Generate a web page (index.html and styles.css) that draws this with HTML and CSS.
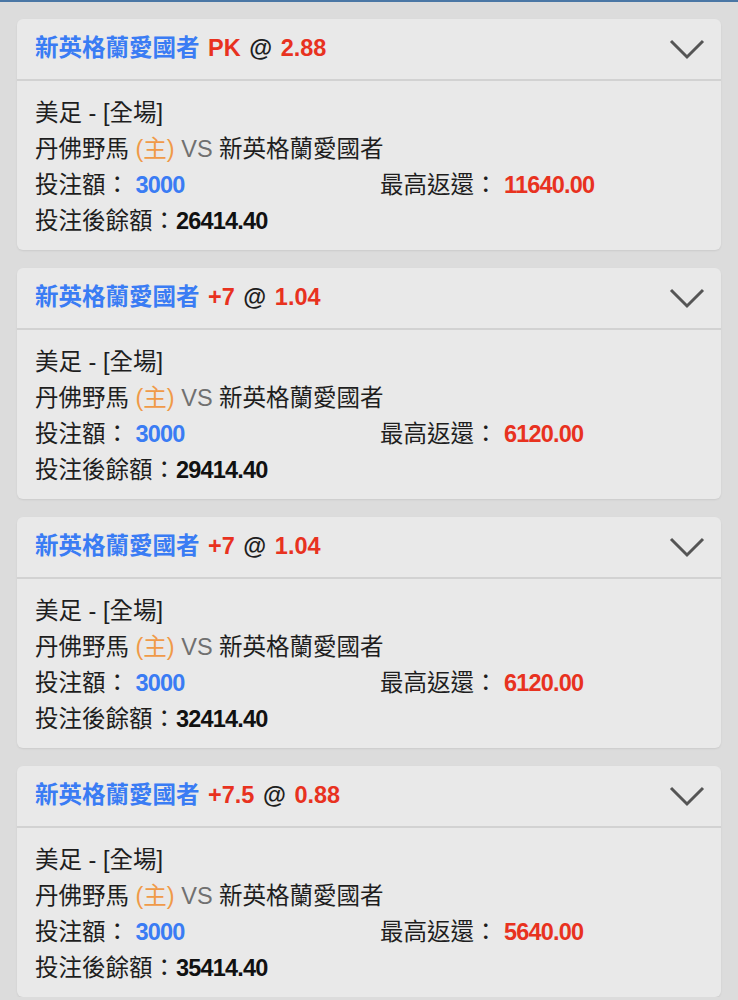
FILE: index.html
```html
<!DOCTYPE html>
<html lang="zh-Hant">
<head>
  <meta charset="UTF-8">
  <meta name="viewport" content="width=device-width, initial-scale=1.0">
  <title>注單</title>
  <link rel="stylesheet" href="styles.css">
</head>
<body>

  <div class="topbar"></div>

  <div class="list">

    <div class="bet">
      <div class="bet-head">
        <div class="pick"><span class="team">新英格蘭愛國者</span> <span class="red">PK</span> @ <span class="red">2.88</span></div>
        <svg class="chevron" width="36" height="22" viewBox="0 0 36 22"><path d="M2 3 L18 19 L34 3" fill="none" stroke="#555" stroke-width="3"/></svg>
      </div>
      <div class="bet-body">
        <div>美足 - [全場]</div>
        <div>丹佛野馬 <span class="home">(主)</span> <span class="vs">VS</span> 新英格蘭愛國者</div>
        <div class="row">
          <div class="col">投注額： <span class="blue num">3000</span></div>
          <div>最高返還： <span class="red num">11640.00</span></div>
        </div>
        <div>投注後餘額：<span class="bold num">26414.40</span></div>
      </div>
    </div>

    <div class="bet">
      <div class="bet-head">
        <div class="pick"><span class="team">新英格蘭愛國者</span> <span class="red">+7</span> @ <span class="red">1.04</span></div>
        <svg class="chevron" width="36" height="22" viewBox="0 0 36 22"><path d="M2 3 L18 19 L34 3" fill="none" stroke="#555" stroke-width="3"/></svg>
      </div>
      <div class="bet-body">
        <div>美足 - [全場]</div>
        <div>丹佛野馬 <span class="home">(主)</span> <span class="vs">VS</span> 新英格蘭愛國者</div>
        <div class="row">
          <div class="col">投注額： <span class="blue num">3000</span></div>
          <div>最高返還： <span class="red num">6120.00</span></div>
        </div>
        <div>投注後餘額：<span class="bold num">29414.40</span></div>
      </div>
    </div>

    <div class="bet">
      <div class="bet-head">
        <div class="pick"><span class="team">新英格蘭愛國者</span> <span class="red">+7</span> @ <span class="red">1.04</span></div>
        <svg class="chevron" width="36" height="22" viewBox="0 0 36 22"><path d="M2 3 L18 19 L34 3" fill="none" stroke="#555" stroke-width="3"/></svg>
      </div>
      <div class="bet-body">
        <div>美足 - [全場]</div>
        <div>丹佛野馬 <span class="home">(主)</span> <span class="vs">VS</span> 新英格蘭愛國者</div>
        <div class="row">
          <div class="col">投注額： <span class="blue num">3000</span></div>
          <div>最高返還： <span class="red num">6120.00</span></div>
        </div>
        <div>投注後餘額：<span class="bold num">32414.40</span></div>
      </div>
    </div>

    <div class="bet">
      <div class="bet-head">
        <div class="pick"><span class="team">新英格蘭愛國者</span> <span class="red">+7.5</span> @ <span class="red">0.88</span></div>
        <svg class="chevron" width="36" height="22" viewBox="0 0 36 22"><path d="M2 3 L18 19 L34 3" fill="none" stroke="#555" stroke-width="3"/></svg>
      </div>
      <div class="bet-body">
        <div>美足 - [全場]</div>
        <div>丹佛野馬 <span class="home">(主)</span> <span class="vs">VS</span> 新英格蘭愛國者</div>
        <div class="row">
          <div class="col">投注額： <span class="blue num">3000</span></div>
          <div>最高返還： <span class="red num">5640.00</span></div>
        </div>
        <div>投注後餘額：<span class="bold num">35414.40</span></div>
      </div>
    </div>

  </div>

</body>
</html>
```

FILE: styles.css
```css
body {
  margin: 0;
  padding: 0;
  background-color: #dcdcdc;
  font-family: "Liberation Sans", "Noto Sans CJK TC", sans-serif;
  font-size: 23.5px;
  color: #1e1e1e;
}

.topbar {
  height: 2px;
  background-color: #4a77a5;
}

.list {
  padding: 17px 17px 0;
  display: flex;
  flex-direction: column;
  gap: 18px;
}

.bet {
  background-color: #e9e9e9;
  border-radius: 6px;
  box-shadow: 0 1px 2px rgba(0, 0, 0, 0.08);
}

.bet-head {
  height: 60px;
  display: flex;
  align-items: center;
  justify-content: space-between;
  padding: 0 16px 0 18px;
  border-bottom: 2px solid #d2d2d2;
}

.pick {
  font-weight: bold;
  color: #1e1e1e;
  margin-bottom: 6px;
  word-spacing: 2px;
}

.team {
  color: #3a7cf4;
}

.red {
  color: #e8321f;
}

.num {
  letter-spacing: -0.8px;
}

.chevron {
  display: block;
}

.bet-body {
  padding: 14px 18px 11px;
  line-height: 36px;
}

.row {
  display: flex;
}

.col {
  width: 345px;
}

.home {
  color: #f09a48;
}

.vs {
  color: #707070;
}

.blue {
  color: #3a7cf4;
  font-weight: bold;
}

.bet-body .red {
  font-weight: bold;
}

.bold {
  font-weight: bold;
  color: #111;
}
```
